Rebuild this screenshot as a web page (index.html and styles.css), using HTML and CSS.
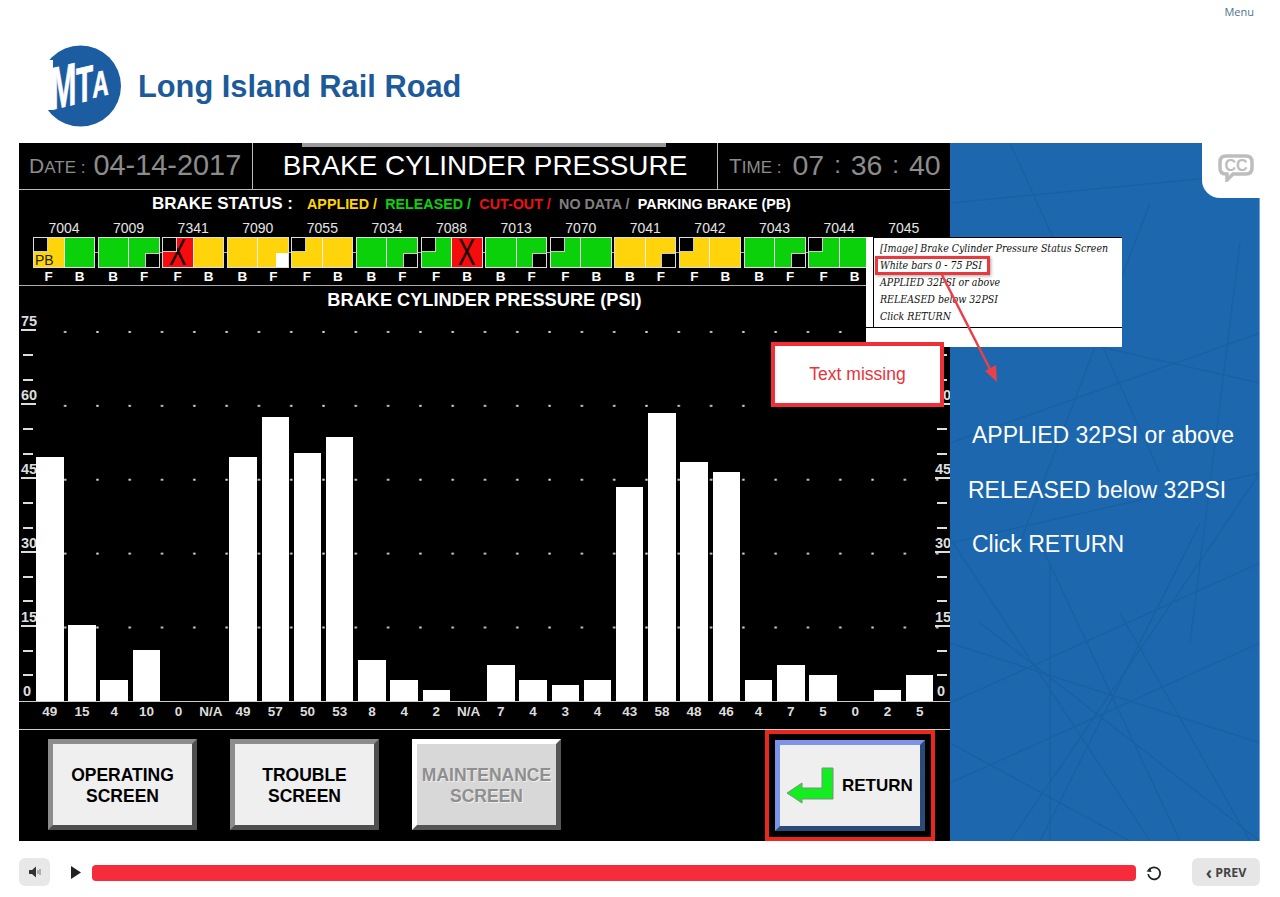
FILE: index.html
```html
<!DOCTYPE html>
<html lang="en">
<head>
    <meta charset="UTF-8">
    <meta name="viewport" content="width=device-width, initial-scale=1.0">
    <title>Long Island Rail Road</title>
    <link rel="stylesheet" href="styles.css">
</head>
<body>

    <div class="topbar"><a class="menu-link">Menu</a></div>

    <div class="brand">
        <svg class="logo" width="76" height="82" viewBox="0 0 76 82">
            <circle cx="34.5" cy="41" r="40.5" fill="#1c5da1"/>
            <rect x="0" y="15" width="7" height="50" fill="#fff"/>
            <g fill="#fff" stroke="#fff" stroke-width="0.8" font-family="Liberation Sans, sans-serif" font-weight="700">
                <text transform="translate(4.5 65) skewY(-13) scale(.52 1)" font-size="60">M</text>
                <text transform="translate(30 58.5) skewY(-13) scale(.56 1)" font-size="50">T</text>
                <text transform="translate(46.5 53) skewY(-13) scale(.62 1)" font-size="36">A</text>
            </g>
        </svg>
        <h1 class="brand-name">Long Island Rail Road</h1>
    </div>

    <div class="stage">
        <div class="screen">
            <div class="clock">
                <div class="clock-date"><span class="caps">D<small>ATE :</small></span><span class="digits">04-14-2017</span></div>
                <div class="clock-title">BRAKE CYLINDER PRESSURE</div>
                <div class="clock-time"><span class="caps">T<small>IME :</small></span><span class="digits time-digits">07 <i>:</i> 36 <i>:</i> 40</span></div>
            </div>

            <div class="status">
                <div class="legend">
                    <b class="legend-head">BRAKE STATUS :</b>
                    <span class="c-yellow">APPLIED /</span>
                    <span class="c-green">RELEASED /</span>
                    <span class="c-red">CUT-OUT /</span>
                    <span class="c-gray">NO DATA /</span>
                    <span class="c-white">PARKING BRAKE (PB)</span>
                </div>
                <div class="cars">
                    <div class="car"><div class="car-no">7004</div><div class="cells"><div class="cell yellow"><i class="notch tl"></i><span class="pb">PB</span></div><div class="cell green"></div></div><div class="ends"><span>F</span><span>B</span></div></div>
                    <div class="car"><div class="car-no">7009</div><div class="cells"><div class="cell green"></div><div class="cell green"><i class="notch br"></i></div></div><div class="ends"><span>B</span><span>F</span></div></div>
                    <div class="car"><div class="car-no">7341</div><div class="cells"><div class="cell red"><span class="cross">X</span><i class="notch tl"></i></div><div class="cell yellow"></div></div><div class="ends"><span>F</span><span>B</span></div></div>
                    <div class="car"><div class="car-no">7090</div><div class="cells"><div class="cell yellow"></div><div class="cell yellow"><i class="notch br white"></i></div></div><div class="ends"><span>B</span><span>F</span></div></div>
                    <div class="car"><div class="car-no">7055</div><div class="cells"><div class="cell yellow"><i class="notch tl"></i></div><div class="cell yellow"></div></div><div class="ends"><span>F</span><span>B</span></div></div>
                    <div class="car"><div class="car-no">7034</div><div class="cells"><div class="cell green"></div><div class="cell green"><i class="notch br"></i></div></div><div class="ends"><span>B</span><span>F</span></div></div>
                    <div class="car"><div class="car-no">7088</div><div class="cells"><div class="cell green"><i class="notch tl"></i></div><div class="cell red"><span class="cross">X</span></div></div><div class="ends"><span>F</span><span>B</span></div></div>
                    <div class="car"><div class="car-no">7013</div><div class="cells"><div class="cell green"></div><div class="cell green"><i class="notch br"></i></div></div><div class="ends"><span>B</span><span>F</span></div></div>
                    <div class="car"><div class="car-no">7070</div><div class="cells"><div class="cell green"><i class="notch tl"></i></div><div class="cell green"></div></div><div class="ends"><span>F</span><span>B</span></div></div>
                    <div class="car"><div class="car-no">7041</div><div class="cells"><div class="cell yellow"></div><div class="cell yellow"><i class="notch br"></i></div></div><div class="ends"><span>B</span><span>F</span></div></div>
                    <div class="car"><div class="car-no">7042</div><div class="cells"><div class="cell yellow"><i class="notch tl"></i></div><div class="cell yellow"></div></div><div class="ends"><span>F</span><span>B</span></div></div>
                    <div class="car"><div class="car-no">7043</div><div class="cells"><div class="cell green"></div><div class="cell green"><i class="notch br"></i></div></div><div class="ends"><span>B</span><span>F</span></div></div>
                    <div class="car"><div class="car-no">7044</div><div class="cells"><div class="cell green"><i class="notch tl"></i></div><div class="cell green"></div></div><div class="ends"><span>F</span><span>B</span></div></div>
                    <div class="car"><div class="car-no">7045</div></div>
                </div>
            </div>

            <div class="chart-title">BRAKE CYLINDER PRESSURE (PSI)</div>

            <div class="chart">
                <div class="dots"></div>
                <div class="axis axis-left">
                    <div class="row major"><span>75</span></div><div class="row"></div><div class="row"></div>
                    <div class="row major"><span>60</span></div><div class="row"></div><div class="row"></div>
                    <div class="row major"><span>45</span></div><div class="row"></div><div class="row"></div>
                    <div class="row major"><span>30</span></div><div class="row"></div><div class="row"></div>
                    <div class="row major"><span>15</span></div><div class="row"></div><div class="row"></div>
                    <div class="row zero"><span>0</span></div>
                </div>
                <div class="axis axis-right">
                    <div class="row major"></div><div class="row"></div><div class="row"></div>
                    <div class="row major"><span>60</span></div><div class="row"></div><div class="row"></div>
                    <div class="row major"><span>45</span></div><div class="row"></div><div class="row"></div>
                    <div class="row major"><span>30</span></div><div class="row"></div><div class="row"></div>
                    <div class="row major"><span>15</span></div><div class="row"></div><div class="row"></div>
                    <div class="row zero"><span>0</span></div>
                </div>
                <div class="bars">
                    <div class="bar" style="height:244px"></div>
                    <div class="bar" style="height:76px"></div>
                    <div class="bar" style="height:21px"></div>
                    <div class="bar" style="height:51px"></div>
                    <div class="bar" style="height:0"></div>
                    <div class="bar" style="height:0"></div>
                    <div class="bar" style="height:244px"></div>
                    <div class="bar" style="height:284px"></div>
                    <div class="bar" style="height:248px"></div>
                    <div class="bar" style="height:264px"></div>
                    <div class="bar" style="height:41px"></div>
                    <div class="bar" style="height:21px"></div>
                    <div class="bar" style="height:11px"></div>
                    <div class="bar" style="height:0"></div>
                    <div class="bar" style="height:36px"></div>
                    <div class="bar" style="height:21px"></div>
                    <div class="bar" style="height:16px"></div>
                    <div class="bar" style="height:21px"></div>
                    <div class="bar" style="height:214px"></div>
                    <div class="bar" style="height:288px"></div>
                    <div class="bar" style="height:239px"></div>
                    <div class="bar" style="height:229px"></div>
                    <div class="bar" style="height:21px"></div>
                    <div class="bar" style="height:36px"></div>
                    <div class="bar" style="height:26px"></div>
                    <div class="bar" style="height:0"></div>
                    <div class="bar" style="height:11px"></div>
                    <div class="bar" style="height:26px"></div>
                </div>
            </div>

            <div class="values">
                <span>49</span><span>15</span><span>4</span><span>10</span><span>0</span><span>N/A</span><span>49</span>
                <span>57</span><span>50</span><span>53</span><span>8</span><span>4</span><span>2</span><span>N/A</span>
                <span>7</span><span>4</span><span>3</span><span>4</span><span>43</span><span>58</span><span>48</span>
                <span>46</span><span>4</span><span>7</span><span>5</span><span>0</span><span>2</span><span>5</span>
            </div>

            <div class="nav">
                <button class="hmi-btn">OPERATING<br>SCREEN</button>
                <button class="hmi-btn">TROUBLE<br>SCREEN</button>
                <button class="hmi-btn disabled">MAINTENANCE<br>SCREEN</button>
                <div class="return-mark">
                    <button class="hmi-btn return">
                        <svg width="48" height="37" viewBox="0 0 48 37">
                            <polygon points="1,26 16,16 16,21 36,21 36,1 47,1 47,32 16,32 16,36" fill="#12ee20" stroke="#7d8f7d" stroke-width="1"/>
                        </svg>
                        RETURN
                    </button>
                </div>
            </div>
        </div>

        <div class="side">
            <svg class="side-lines" width="310" height="698" viewBox="0 0 310 698">
                <g stroke="#12548f" stroke-width="1.2" fill="none" opacity="0.35">
                    <path d="M0 560 L310 420"/>
                    <path d="M0 640 L310 500"/>
                    <path d="M0 600 L180 698"/>
                    <path d="M30 480 L310 698"/>
                    <path d="M-10 380 L200 698"/>
                    <path d="M310 330 L60 698"/>
                    <path d="M250 380 L90 698"/>
                    <path d="M90 400 L230 698"/>
                    <path d="M170 470 L300 698"/>
                    <path d="M0 300 L310 190"/>
                    <path d="M0 170 L310 240"/>
                    <path d="M60 0 L210 330"/>
                    <path d="M200 60 L70 400"/>
                    <path d="M0 60 L310 30"/>
                    <path d="M0 400 L310 330"/>
                    <path d="M290 100 L240 500"/>
                    <path d="M0 500 L310 600"/>
                    <path d="M100 420 L100 698"/>
                </g>
            </svg>
            <p class="side-line">APPLIED 32PSI or above</p>
            <p class="side-line shifted">RELEASED below 32PSI</p>
            <p class="side-line">Click RETURN</p>
        </div>

        <div class="cc-tab">
            <svg width="36" height="28" viewBox="0 0 36 28">
                <path d="M8 2 H28 Q34 2 34 8 V14 Q34 20 28 20 H15 L9 26 V20 H8 Q2 20 2 14 V8 Q2 2 8 2 Z" fill="none" stroke="#bdbdbd" stroke-width="3.5"/>
                <text x="18" y="16.5" text-anchor="middle" font-family="Liberation Sans, sans-serif" font-weight="700" font-size="16" fill="#bdbdbd">CC</text>
            </svg>
        </div>

        <div class="top-strip"></div>

        <!-- review notes on top of the slide -->
        <div class="note">
            <div class="note-body">
                <div>[Image] Brake Cylinder Pressure Status Screen</div>
                <div>White bars 0 - 75 PSI</div>
                <div>APPLIED 32PSI or above</div>
                <div>RELEASED below 32PSI</div>
                <div>Click RETURN</div>
            </div>
            <div class="note-mark"></div>
        </div>
        <div class="missing">Text missing</div>
        <svg class="pointer" width="1241" height="698" viewBox="0 0 1241 698">
            <line x1="923" y1="132" x2="974" y2="232" stroke="#e8414a" stroke-width="2.5"/>
            <polygon points="978,239 966,228 977,222" fill="#e8414a"/>
        </svg>
    </div>

    <div class="player">
        <button class="volume">
            <svg width="14" height="14" viewBox="0 0 14 14">
                <path d="M1 5 H4 L8 1.5 V12.5 L4 9 H1 Z" fill="#333"/>
                <path d="M10 5 V9 M12 4 V10" stroke="#777" stroke-width="1"/>
            </svg>
        </button>
        <svg class="play" width="11" height="13" viewBox="0 0 11 13"><polygon points="1,0 11,6.5 1,13" fill="#222"/></svg>
        <div class="progress"></div>
        <svg class="reload" width="18" height="18" viewBox="0 0 18 18">
            <path d="M4.2 6 A6 6 0 1 1 3.2 10" fill="none" stroke="#222" stroke-width="1.7"/>
            <polygon points="1.5,7.5 6.5,8 4.8,3.5" fill="#222"/>
        </svg>
        <button class="prev"><span class="chev">‹</span> PREV</button>
    </div>

</body>
</html>
```

FILE: styles.css
```css
* {
    box-sizing: border-box;
}
body {
    margin: 0;
    background-color: #fff;
    font-family: "Liberation Sans", Arial, sans-serif;
    overflow: hidden;
}
.topbar {
    display: flex;
    justify-content: flex-end;
    height: 22px;
    padding: 5px 26px 0 0;
}
.menu-link {
    font-family: "Open Sans", sans-serif;
    font-size: 11px;
    line-height: 13px;
    color: #4b7393;
}
.brand {
    display: flex;
    align-items: flex-start;
    height: 121px;
    padding: 23px 0 0 46px;
}
.brand-name {
    margin: 23px 0 0 16px;
    font-size: 30.8px;
    line-height: 38px;
    font-weight: 700;
    color: #1c5a99;
}

/* slide */
.stage {
    position: relative;
    display: flex;
    width: 1241px;
    height: 698px;
    margin-left: 19px;
}
.screen {
    display: flex;
    flex-direction: column;
    width: 931px;
    height: 698px;
    background-color: #000;
    color: #fff;
}
.clock {
    display: flex;
    height: 47px;
    border-bottom: 1px solid #bbb;
}
.clock-date, .clock-title, .clock-time {
    display: flex;
    align-items: center;
}
.clock-date {
    width: 234px;
    padding-left: 10px;
    border-right: 1px solid #bbb;
}
.clock-title {
    justify-content: center;
    width: 465px;
    font-size: 27.9px;
    border-right: 1px solid #bbb;
}
.clock-time {
    flex: 1;
    padding-left: 11px;
}
.caps {
    font-size: 21px;
    color: #8c8c8c;
    white-space: nowrap;
}
.caps small {
    font-size: 17px;
}
.digits {
    margin-left: 8px;
    font-size: 28.9px;
    color: #8c8c8c;
}
.time-digits {
    margin-left: 11px;
    font-size: 28.5px;
    white-space: pre;
}
.time-digits i {
    font-style: normal;
    font-size: 24px;
    padding: 0 2px;
    vertical-align: 2px;
}
.status {
    height: 96px;
    border-bottom: 1px solid #aaa;
}
.legend {
    display: flex;
    align-items: center;
    height: 29px;
    padding-left: 133px;
    font-size: 14.3px;
    font-weight: 700;
    white-space: nowrap;
}
.legend span {
    margin-left: 8.3px;
}
.legend-head {
    font-size: 17px;
    margin-right: 5.7px;
}
.c-yellow { color: #ffd400; }
.c-green { color: #0ad10a; }
.c-red { color: #f01010; }
.c-gray { color: #808080; }
.c-white { color: #fff; }
.cars {
    display: grid;
    grid-template-columns: repeat(14, 64.6px);
    padding-left: 14px;
}
.car {
    width: 62px;
}
.car-no {
    height: 18px;
    font-size: 14px;
    line-height: 18px;
    text-align: center;
    color: #e4e4e4;
}
.cells {
    position: relative;
    display: flex;
    gap: 1px;
    height: 31px;
    background-color: #eee;
    border: 1px solid #ddd;
}
.cells::after {
    content: "";
    position: absolute;
    top: 14px;
    right: -4px;
    width: 3px;
    height: 1px;
    background-color: #aaa;
}
.car:nth-child(13) .cells::after {
    display: none;
}
.cell {
    position: relative;
    flex: 1;
    display: flex;
    align-items: flex-end;
    overflow: hidden;
}
.green { background-color: #0ad10a; }
.yellow { background-color: #ffd40a; }
.red { background-color: #f50d0d; }
.notch {
    position: absolute;
    width: 14px;
    height: 14px;
    background-color: #000;
}
.notch.tl {
    top: 0;
    left: 0;
    border-right: 1px solid #ccc;
    border-bottom: 1px solid #ccc;
}
.notch.br {
    right: 0;
    bottom: 0;
    border-top: 1px solid #ccc;
    border-left: 1px solid #ccc;
}
.notch.white {
    background-color: #fff;
    border: none;
    width: 12px;
}
.pb {
    padding: 0 0 0 1px;
    font-size: 14px;
    line-height: 14px;
    color: #222;
}
.cross {
    position: absolute;
    top: 0;
    left: 0;
    width: 100%;
    font-size: 28px;
    line-height: 29px;
    text-align: center;
    color: #1a0606;
    transform: scale(0.95, 1.35);
}
.ends {
    display: flex;
    height: 17px;
    font-size: 13.5px;
    line-height: 18px;
    font-weight: 700;
}
.ends span {
    flex: 1;
    text-align: center;
}
.chart-title {
    height: 31px;
    font-size: 18.2px;
    line-height: 29px;
    font-weight: 700;
    text-align: center;
}
.chart {
    position: relative;
    height: 386px;
}
.dots {
    position: absolute;
    top: 0;
    left: 30px;
    right: 0;
    height: 330px;
    background-image: radial-gradient(circle, #ddd 1px, transparent 1.3px);
    background-size: 32.3px 73.9px;
    background-position: 0 -22px;
}
.axis {
    position: absolute;
    bottom: 0;
    display: flex;
    flex-direction: column;
    width: 15px;
}
.axis-left { left: 2px; }
.axis-right { right: 0; }
.axis .row {
    position: relative;
    height: 24.67px;
}
.axis .row::after {
    content: "";
    position: absolute;
    left: 2px;
    bottom: 0;
    width: 10px;
    height: 2px;
    background-color: #ddd;
}
.axis .row span {
    position: absolute;
    left: 0;
    bottom: 2px;
    font-size: 14.5px;
    line-height: 15px;
    font-weight: 700;
    color: #ddd;
}
.axis .major::after {
    left: 0;
    width: 15px;
}
.axis .zero::after {
    display: none;
}
.axis .zero span {
    left: 2px;
}
.bars, .values {
    display: grid;
    grid-template-columns: repeat(28, 32.22px);
    padding-left: 17px;
}
.bars {
    position: relative;
    align-items: end;
    height: 100%;
}
.bar {
    width: 27.5px;
    background-color: #fff;
}
.values {
    height: 29px;
    border-top: 1px solid #ccc;
    border-bottom: 1px solid #ccc;
    font-size: 13.5px;
    line-height: 20px;
    font-weight: 700;
    color: #ddd;
}
.values span {
    width: 27.5px;
    text-align: center;
}
.nav {
    display: flex;
    align-items: flex-start;
    flex: 1;
    padding: 9px 0 0 29px;
    gap: 33px;
}
.hmi-btn {
    width: 149px;
    height: 91px;
    padding: 2px 0 0;
    border-width: 5px;
    border-style: solid;
    border-color: #8c8c8c #4f4f4f #4f4f4f #8c8c8c;
    background-color: #efefef;
    font-family: "Liberation Sans", Arial, sans-serif;
    font-size: 17.5px;
    line-height: 21px;
    font-weight: 700;
    color: #000;
}
.hmi-btn.disabled {
    border-color: #fff #555 #555 #fff;
    background-color: #d8d8d8;
    color: #8f8f8f;
    text-shadow: 1px 1px 0 #eee;
}
.return-mark {
    margin: -9px 0 0 171px;
    padding: 6px;
    width: 170px;
    height: 111px;
    border: 4px solid #e8281f;
}
.hmi-btn.return {
    display: flex;
    align-items: center;
    gap: 8px;
    width: 150px;
    padding: 0 0 0 6px;
    border-color: #7b93e8 #2c4a78 #2c4a78 #7b93e8;
    font-size: 17px;
}

/* right hand panel */
.side {
    position: relative;
    width: 310px;
    height: 698px;
    padding-top: 265px;
    background-color: #1c67ad;
    border-right: 1px solid #6fa3d6;
    overflow: hidden;
}
.side-lines {
    position: absolute;
    top: 0;
    left: 0;
}
.side-line {
    position: relative;
    margin: 0 0 0 22px;
    font-size: 23px;
    line-height: 54.5px;
    color: #fff;
    white-space: nowrap;
}
.side-line.shifted {
    margin-left: 18px;
}
.cc-tab {
    position: absolute;
    top: 0;
    right: 0;
    display: flex;
    justify-content: flex-end;
    width: 58px;
    height: 55px;
    padding: 11px 6px 0 0;
    background-color: #fff;
    border-bottom-left-radius: 18px;
}
.top-strip {
    position: absolute;
    top: 0;
    left: 283px;
    width: 364px;
    height: 4px;
    background-color: #999;
}
.note {
    position: absolute;
    top: 94px;
    left: 847px;
    width: 256px;
    height: 110px;
    background-color: #fff;
}
.note-body {
    height: 91px;
    padding: 3px 0 0 7px;
    border-bottom: 1px solid #000;
    font-family: "DejaVu Serif", serif;
    font-stretch: condensed;
    font-style: italic;
    font-size: 10.5px;
    line-height: 17px;
    color: #111;
    white-space: nowrap;
    position: relative;
}
.note-body::before {
    content: "";
    position: absolute;
    top: 0;
    left: 7px;
    right: 0;
    bottom: 0;
    border-top: 1px solid #000;
    border-left: 1px solid #000;
}
.note-body div {
    padding-left: 7px;
}
.note-mark {
    position: absolute;
    top: 19px;
    left: 9px;
    width: 115px;
    height: 19px;
    border: 3px solid #e8393f;
    box-shadow: 1px 1px 3px rgba(0, 0, 0, 0.35);
}
.missing {
    position: absolute;
    top: 199px;
    left: 752px;
    display: flex;
    align-items: center;
    justify-content: center;
    width: 173px;
    height: 65px;
    border: 4px solid #f03038;
    background-color: #fff;
    font-size: 17.5px;
    color: #e8333a;
}
.pointer {
    position: absolute;
    top: 0;
    left: 0;
    pointer-events: none;
}

/* player controls */
.player {
    display: flex;
    align-items: center;
    width: 1260px;
    height: 28px;
    margin: 17px 0 0 19px;
}
.volume {
    display: flex;
    align-items: center;
    justify-content: center;
    width: 31px;
    height: 28px;
    padding: 0;
    border: none;
    border-radius: 6px;
    background-color: #e8e8e8;
}
.play {
    margin-left: 20px;
}
.progress {
    width: 1044px;
    height: 16px;
    margin: 2px 0 0 11px;
    border-radius: 4px;
    background-color: #f62c3d;
}
.reload {
    margin: 2px 0 0 9px;
}
.prev {
    width: 68px;
    height: 28px;
    margin-left: 29px;
    padding: 0 0 4px;
    border: none;
    border-radius: 6px;
    background-color: #e6e6e6;
    font-family: "Open Sans", sans-serif;
    font-size: 12.5px;
    font-weight: 700;
    color: #444;
}
.chev {
    position: relative;
    top: 2px;
    font-size: 17px;
}
```
